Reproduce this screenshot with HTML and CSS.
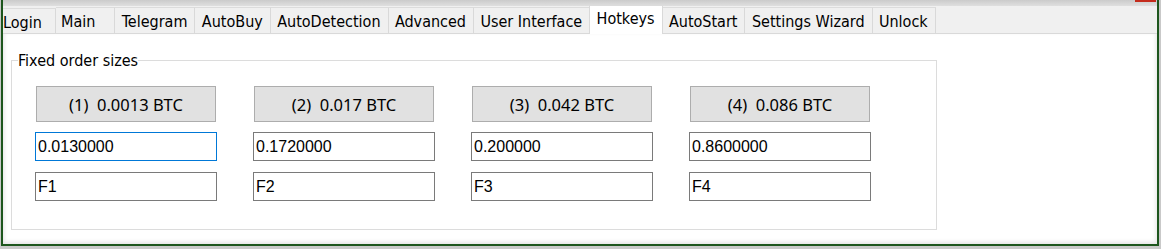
FILE: index.html
```html
<!DOCTYPE html>
<html lang="en">
<head>
    <meta charset="UTF-8">
    <meta name="viewport" content="width=device-width, initial-scale=1.0">
    <title>Hotkeys</title>
    <link rel="stylesheet" href="styles.css">
</head>
<body>
    <div class="window">
        <div class="titlebar"><span class="close-edge"></span></div>
        <div class="tabs">
            <div class="tab tab-login">Login</div>
            <div class="tab tab-main">Main</div>
            <div class="tab">Telegram</div>
            <div class="tab">AutoBuy</div>
            <div class="tab">AutoDetection</div>
            <div class="tab">Advanced</div>
            <div class="tab">User Interface</div>
            <div class="tab active">Hotkeys</div>
            <div class="tab">AutoStart</div>
            <div class="tab">Settings Wizard</div>
            <div class="tab">Unlock</div>
        </div>
        <div class="page">
            <fieldset class="group">
                <legend>Fixed order sizes</legend>
                <div class="sizes">
                    <div class="size">
                        <button class="size-btn">(1)&nbsp; 0.0013 BTC</button>
                        <input class="field focused" type="text" value="0.0130000">
                        <input class="field" type="text" value="F1">
                    </div>
                    <div class="size">
                        <button class="size-btn">(2)&nbsp; 0.017 BTC</button>
                        <input class="field" type="text" value="0.1720000">
                        <input class="field" type="text" value="F2">
                    </div>
                    <div class="size">
                        <button class="size-btn">(3)&nbsp; 0.042 BTC</button>
                        <input class="field" type="text" value="0.200000">
                        <input class="field" type="text" value="F3">
                    </div>
                    <div class="size">
                        <button class="size-btn">(4)&nbsp; 0.086 BTC</button>
                        <input class="field" type="text" value="0.8600000">
                        <input class="field" type="text" value="F4">
                    </div>
                </div>
            </fieldset>
        </div>
    </div>
</body>
</html>
```

FILE: styles.css
```css
body {
    margin: 0;
    background: #c9c9c9;
    font-family: "DejaVu Sans Condensed", "DejaVu Sans", sans-serif;
    color: #000;
}
.window {
    margin-left: 1px;
    width: 1154px;
    height: 244px;
    border: 2px solid #1d561d;
    border-top: 0;
    background: #fff;
    display: flex;
    flex-direction: column;
    overflow: hidden;
}
.titlebar {
    height: 6px;
    flex: none;
    background: linear-gradient(#cbcbcb, #dfdfdf);
    display: flex;
    justify-content: flex-end;
}
.close-edge {
    width: 21px;
    height: 2px;
    margin-right: 1px;
    background: #c42b1c;
}
.tabs {
    height: 27px;
    flex: none;
    background: #f0f0f0;
    border-bottom: 1px solid #d9d9d9;
    display: flex;
    align-items: flex-end;
}
.tab {
    height: 25px;
    line-height: 27px;
    padding: 0 7px 0 6.4px;
    font-size: 16px;
    border-top: 1px solid #dcdcdc;
    border-right: 1px solid #d9d9d9;
    white-space: nowrap;
    overflow: hidden;
}
.tab-login {
    padding-left: 0;
    width: 53px;
    box-sizing: border-box;
}
.tab-main {
    padding-left: 5px;
    padding-right: 19px;
}
.tab.active {
    height: 28px;
    line-height: 26px;
    margin-bottom: -1px;
    margin-left: -1px;
    background: #fff;
    border-left: 1px solid #d9d9d9;
}
.page {
    flex: 1;
    padding: 17px 0 0 8px;
    box-shadow: inset -3px -4px 4px -2px #e4e4e4, inset 3px 0 4px -2px #e4e4e4;
}
.group {
    width: 901px;
    margin: 0;
    padding: 16px 0 28px 23px;
    border: 1px solid #dcdcdc;
    box-sizing: content-box;
}
.group legend {
    margin-left: -17px;
    padding: 0;
    font-size: 16px;
    line-height: 19px;
}
.sizes {
    display: flex;
    gap: 36px;
}
.size {
    width: 182px;
    display: flex;
    flex-direction: column;
}
.size-btn {
    height: 36px;
    margin: 0 1px 10px;
    background: #e1e1e1;
    border: 1px solid #adadad;
    font-family: "Noto Sans", sans-serif;
    font-size: 16.5px;
    color: #000;
    padding: 0;
}
.field {
    height: 29px;
    margin: 0 0 11px;
    padding: 0 2px;
    border: 1px solid #7a7a7a;
    box-sizing: border-box;
    font-family: "Liberation Sans", Arial, sans-serif;
    font-size: 16px;
    color: #000;
    outline: none;
}
.field:last-child {
    margin-bottom: 0;
}
.field.focused {
    border-color: #0078d7;
}
```
